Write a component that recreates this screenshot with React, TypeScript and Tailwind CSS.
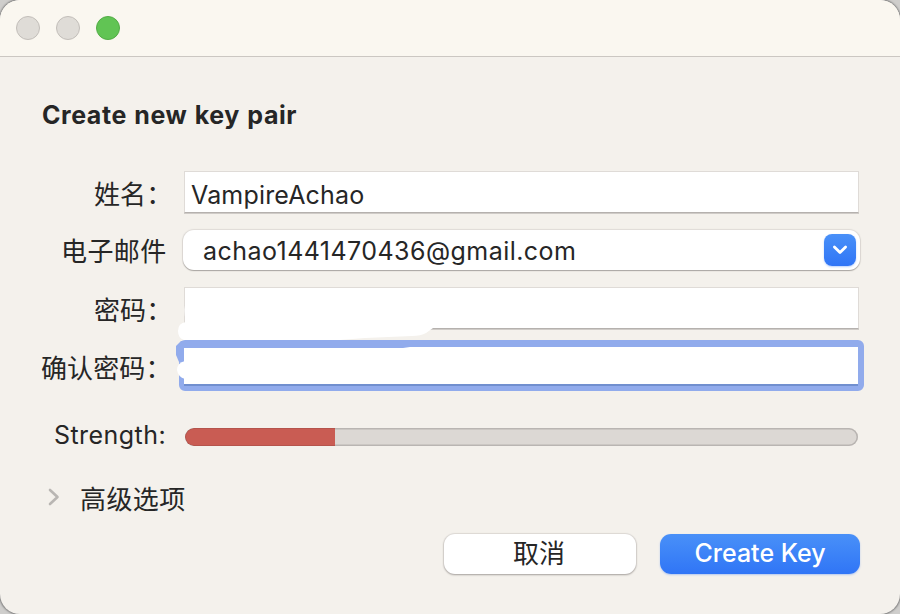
import type { ReactNode } from "react";

function TrafficLights() {
  return (
    <div className="flex gap-4 pl-4">
      <span className="size-6 rounded-full border border-[#c2beb9] bg-[#dfdcd7]" />
      <span className="size-6 rounded-full border border-[#c2beb9] bg-[#dfdcd7]" />
      <span className="size-6 rounded-full border border-[#53ac46] bg-[#61c454]" />
    </div>
  );
}

function Label({ children, className }: { children: ReactNode; className: string }) {
  return <div className={`w-[184px] shrink-0 whitespace-nowrap ${className}`}>{children}</div>;
}

function Colon() {
  return <span className="relative top-0">：</span>;
}

const field = "h-[42px] w-[675px] border border-[#dfdbd7] border-b-[#b5b1ae] bg-white shadow-[0_1px_0_#cfcbc7]";

export default function App() {
  return (
    <div className="h-[614px] w-[900px] overflow-hidden bg-[#cfcecc] font-['Inter','Noto_Sans_CJK_SC',sans-serif] text-[26px] leading-[36px] text-[#262626]">
      <div className="flex h-full flex-col overflow-hidden rounded-[20px] bg-[#f4f1ec] shadow-[0_0_2px_1px_#777]">
        <header className="flex h-[57px] shrink-0 items-center border-b border-[#cbc7c2] bg-[#faf7f0]">
          <TrafficLights />
        </header>

        <h1 className="mt-[40px] h-[36px] pl-[42px] text-[25px] leading-[36px] font-bold tracking-[0.55px] [word-spacing:1px]">
          Create new key pair
        </h1>

        <div className="mt-[38px] flex h-[43px] items-start">
          <Label className="pt-[6px] pl-[94px] tracking-[0.1px]">姓名<Colon /></Label>
          <div className={`${field} flex items-center pl-[6px] text-[25px] tracking-[0.17px]`}>
            <span className="relative top-[3px]">VampireAchao</span>
          </div>
        </div>

        <div className="mt-[16px] flex h-[41px] items-start">
          <Label className="pt-[4px] pl-[61px] tracking-[0.4px]">电子邮件</Label>
          <div className="-ml-px flex h-[40px] w-[677px] items-center justify-between rounded-[11px] bg-white pr-1 pl-[20px] text-[25px] tracking-[0.45px] shadow-[0_1px_1px_#aaa6a2,0_0_1px_1px_#dfdbd7]">
            <span className="relative top-px">achao1441470436@gmail.com</span>
            <span className="flex size-8 items-center justify-center rounded-[8px] bg-linear-to-b from-[#4990f8] to-[#3075f6] shadow-[0_1px_2px_#3075f655]">
              <svg width="16" height="10" viewBox="0 0 16 10" fill="none" stroke="white" strokeWidth="2.8" strokeLinecap="round" strokeLinejoin="round">
                <path d="M2.4 2 8 7.6 13.6 2" />
              </svg>
            </span>
          </div>
        </div>

        <div className="mt-[16px] flex h-[43px] items-start">
          <Label className="pt-[6px] pl-[94px] tracking-[0.1px]">密码<Colon /></Label>
          <div className={`${field} relative`}>
            <svg className="absolute -top-px -left-[9px]" width="260" height="54" viewBox="176 287 260 54" fill="white">
              <path d="M186 299Q183 311 186 322Q178 323 178 331Q178 338 184 340H340L365 338 412 336Q421 336 426 333L433 328V310H184Z" />
            </svg>
          </div>
        </div>

        <div className="mt-[10px] flex h-[51px] items-center">
          <Label className="pt-[6px] pl-[41px] tracking-[0.1px]">确认密码<Colon /></Label>
          <div className="relative -ml-[5px] h-[51px] w-[685px] rounded-[6px] border-[6px] border-t-[7px] border-l-[5px] border-[#91abec] bg-white">
            <div className="mt-[37px] h-[2px] bg-[#718fcf]" />
            <svg className="absolute -top-[7px] -left-[8px]" width="250" height="51" viewBox="176 340 250 51">
              <path d="M176 346 181 341H184V362H179L176 355Z" fill="#91abec" />
              <path d="M184 347H403L410 348H184Z" fill="#91abec" />
              <path d="M185 361Q177 363 177 370Q178 377 185 379Z" fill="white" />
            </svg>
          </div>
        </div>

        <div className="mt-[27px] flex h-[38px] items-center">
          <Label className="pl-[54px] text-[25px] tracking-[0.45px]"><span className="relative -top-[2px]">Strength:</span></Label>
          <div className="ml-px h-[18px] w-[673px] overflow-hidden rounded-full bg-[#dcd8d4] shadow-[inset_0_0_0_1.5px_#b9b5b2]">
            <div className="h-[18px] w-[150px] rounded-l-full border border-r-0 border-[#b5544c] bg-[#c95c53]" />
          </div>
        </div>

        <div className="mt-[24px] flex h-[36px] items-center pl-[48px]">
          <svg className="relative -top-px" width="12" height="18" viewBox="0 0 12 18" fill="none" stroke="#b9b6b3" strokeWidth="2.6" strokeLinecap="round" strokeLinejoin="round">
            <path d="M2 2 9.5 9 2 16" />
          </svg>
          <span className="relative top-[2px] ml-[20px] tracking-[0.4px]">高级选项</span>
        </div>

        <div className="mt-[18px] flex h-10 gap-6 pl-[444px]">
          <button className="flex w-[192px] items-center justify-center rounded-[11px] bg-white shadow-[0_1px_2px_#aaa6a2,0_0_1px_1px_#dfdbd7]">
            <span className="relative -left-px">取消</span>
          </button>
          <button className="flex w-[200px] items-center justify-center rounded-[11px] bg-linear-to-b from-[#4990f8] to-[#3075f6] text-[25px] font-medium text-white shadow-[0_1px_2px_#3075f655]">
            <span className="relative -top-px">Create Key</span>
          </button>
        </div>
      </div>
    </div>
  );
}
